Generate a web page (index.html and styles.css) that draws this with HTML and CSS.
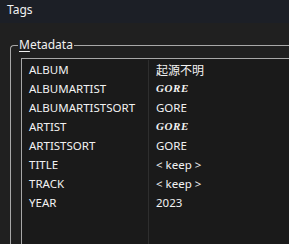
FILE: index.html
```
<!DOCTYPE html>
<html lang='en'>
<head>
    <meta charset='UTF-8'>
    <title>Tags</title>
    <link rel="stylesheet" href="styles.css">
</head>
<body>
    <div class='titlebar'>Tags</div>
    <fieldset class='group'>
        <legend><u>M</u>etadata</legend>
        <div class='list'>
            <div class='row'><span class='name'>ALBUM</span><span class='value cjk'>起源不明</span></div>
            <div class='row'><span class='name'>ALBUMARTIST</span><span class='value fancy'>GORE</span></div>
            <div class='row'><span class='name'>ALBUMARTISTSORT</span><span class='value'>GORE</span></div>
            <div class='row'><span class='name'>ARTIST</span><span class='value fancy'>GORE</span></div>
            <div class='row'><span class='name'>ARTISTSORT</span><span class='value'>GORE</span></div>
            <div class='row'><span class='name'>TITLE</span><span class='value'>&lt; keep &gt;</span></div>
            <div class='row'><span class='name'>TRACK</span><span class='value'>&lt; keep &gt;</span></div>
            <div class='row'><span class='name'>YEAR</span><span class='value'>2023</span></div>
            <div class='row'><span class='name'></span></div>
            <div class='row'><span class='name'></span></div>
        </div>
    </fieldset>
</body>
</html>
```

FILE: styles.css
```
html, body {
    padding:0px;
    margin:0px;
    background: #202020;
    color: #f2f2f2;
    font-family: "Noto Sans", "Noto Sans CJK JP", sans-serif;
    font-size: 12px;
    overflow: hidden;
    height: 244px;
}

.titlebar {
    height: 23px;
    line-height: 20px;
    padding-left: 7px;
    background: #1c1f26;
}

.group {
    margin: 15px 0px 0px 10px;
    padding: 6px 0px 0px 10px;
    border: 1px solid #a8a8a8;
    border-right: none;
    border-bottom: none;
    border-top-left-radius: 4px;
    min-width: 0px;
}

.group legend {
    padding: 0px 1px;
    margin-left: -3px;
    line-height: 14px;
}

.group u {
    text-decoration-thickness: 1px;
    text-underline-offset: 2px;
}

.list {
    background: #1a1a1a;
    border-top: 1px solid #a8a8a8;
    border-left: 1px solid #a8a8a8;
    padding-top: 1px;
    height: 184px;
    overflow: hidden;
    font-size: 11.5px;
}

.row {
    display: flex;
    height: 19px;
    line-height: 19px;
}

.name {
    box-sizing: border-box;
    width: 127px;
    padding-left: 7px;
    border-right: 1px solid #2e2e2e;
    flex-shrink: 0;
}

.value {
    padding-left: 7px;
}

.cjk {
    font-family: "Noto Sans CJK JP", sans-serif;
    font-size: 12px;
}

.fancy {
    font-family: "Liberation Serif", serif;
    font-style: italic;
    font-weight: bold;
    font-size: 11px;
    letter-spacing: 0.6px;
}
```
